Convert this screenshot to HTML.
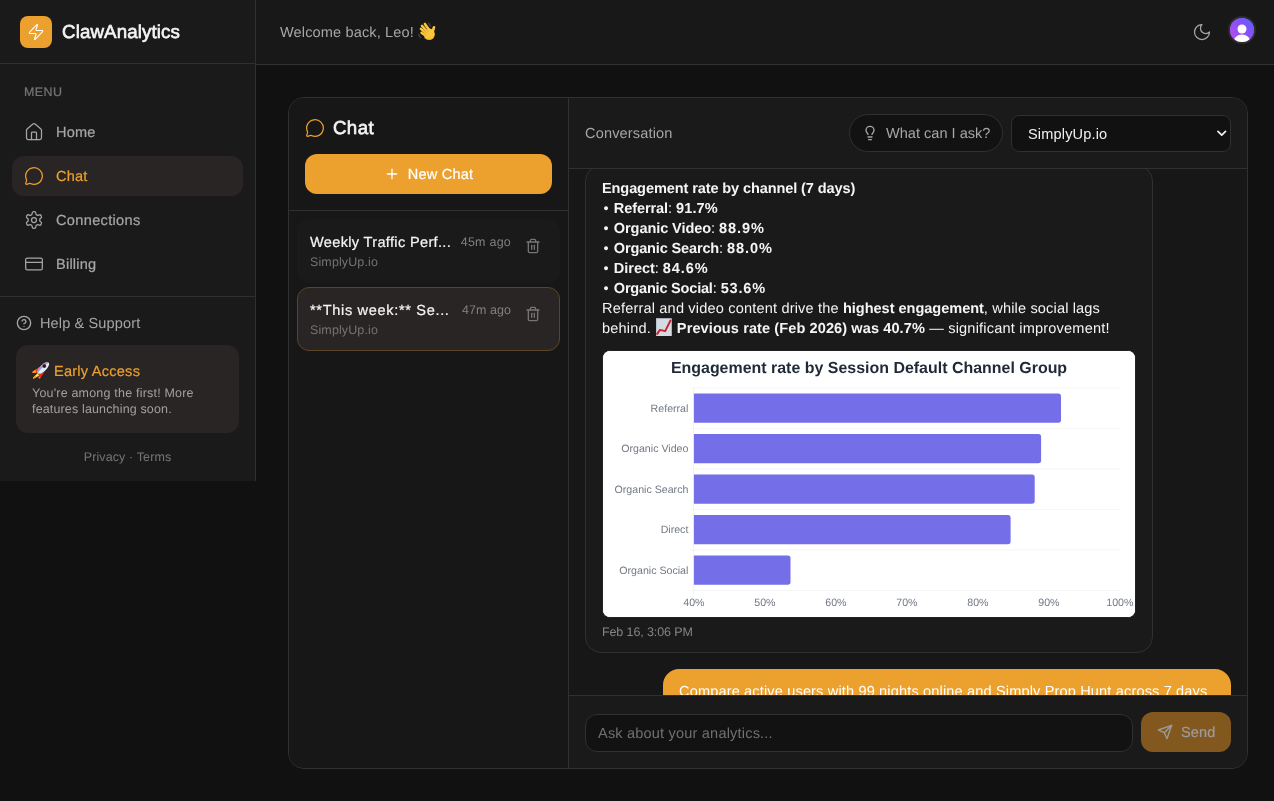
<!DOCTYPE html>
<html lang="en">
<head>
<meta charset="utf-8">
<title>ClawAnalytics – Chat</title>
<style>
*{box-sizing:border-box;margin:0;padding:0}
html,body{width:100%;height:100%;background:#111111;overflow:hidden}
body{text-rendering:geometricPrecision;font-family:"Liberation Sans", Arial, Helvetica, sans-serif;font-size:14.56px;line-height:20px;color:#f5f5f5;-webkit-font-smoothing:antialiased}
svg{display:block;flex:none}
.ic{fill:none;stroke:currentColor;stroke-width:1.5;stroke-linecap:round;stroke-linejoin:round}
#app{position:absolute;left:0;top:0;width:1280px;height:801px;overflow:hidden;will-change:transform}
.nw{white-space:nowrap}
.pre{white-space:pre}
.s2{stroke-width:2}

/* ---------- sidebar ---------- */
.sidebar{position:absolute;left:0;top:0;width:256px;height:481px;background:#1a1a1a;border-right:1px solid #303030}
.brand{height:64px;border-bottom:1px solid #303030;display:flex;align-items:center;padding-left:20px}
.logo{width:32px;height:32px;border-radius:8px;background:#eca02e;color:#fff;display:flex;align-items:center;justify-content:center}
.brand b{margin-left:10px;font-size:18.72px;line-height:28px;font-weight:600;color:#f5f5f5}
.nav{padding:12px 12px 12px 12px;height:233px;border-bottom:1px solid #303030}
.nav .lbl{height:32px;padding:8px 12px;font-size:12.48px;line-height:16px;font-weight:500;color:#757575;text-transform:uppercase}
.nav a{display:flex;align-items:center;height:40px;margin-top:4px;padding:0 12px;border-radius:12px;color:#a6a6a6;font-weight:500;text-decoration:none}
.nav a span{margin-left:12px}
.nav a.on{background:#292524;color:#eca02e}
.foot{padding:16px}
.help{display:flex;align-items:center;height:20px;color:#a6a6a6}
.help span{margin-left:8px}
.early{margin-top:12px;height:88px;border-radius:12px;background:#292524;padding:16px}
.early h4{font-size:14.56px;line-height:20px;height:20px;font-weight:500;color:#eca02e;white-space:pre}
.early p{margin-top:4px;font-size:12.48px;line-height:16px;color:#a0a0a0}
.legal{margin-top:16px;font-size:12.48px;line-height:16px;color:#757575;text-align:center}

/* ---------- top bar ---------- */
.top{position:absolute;left:256px;top:0;width:1024px;height:65px;background:#181818;border-bottom:1px solid #303030}
.top .hello{position:absolute;left:24px;top:22px;height:20px;color:#a6a6a6;white-space:pre}
.top .moon{position:absolute;left:936px;top:22px;color:#a6a6a6}
.top .avatar{position:absolute;left:972px;top:16px;width:28px;height:28px;border-radius:50%;overflow:hidden;border:2px solid #2d2d2d;background:#8b5cf6}

/* ---------- card ---------- */
.card{position:absolute;left:288px;top:97px;width:960px;height:672px;border:1px solid #303030;border-radius:16px;overflow:hidden;background:#1a1a1a}
.list{position:absolute;left:0;top:0;width:280px;height:670px;background:#171717;border-right:1px solid #303030}
.list .hd{height:113px;padding:16px;border-bottom:1px solid #303030}
.list h2{display:flex;align-items:center;height:28px;font-size:18.72px;line-height:28px;font-weight:600;color:#f5f5f5}
.list h2 svg{color:#eca02e;margin-right:8px}
.newchat{margin-top:12px;height:40px;border-radius:12px;background:#eca02e;color:#fff;font-weight:500;display:flex;align-items:center;justify-content:center}
.newchat span{margin-left:8px}
.items{padding:8px}
.item{position:relative;height:64px;border:1px solid transparent;border-radius:12px;background:#1a1a1a;padding:12px;margin-bottom:4px}
.item.on{background:#292524;border-color:#5c4524}
.item .ttl{position:absolute;left:12px;top:12px;font-weight:500;color:#f5f5f5}
.item .sub{position:absolute;left:12px;top:34px;font-size:12.48px;line-height:16px;color:#737373}
.item .ago{position:absolute;right:48px;top:14px;font-size:12.48px;line-height:16px;color:#808080}
.item .del{position:absolute;left:227px;top:18px;color:#757575}

.conv{position:absolute;left:280px;top:0;width:678px;height:670px}
.conv .hd{position:absolute;left:0;top:0;width:678px;height:71px;border-bottom:1px solid #303030;background:#1a1a1a}
.conv .hd .name{position:absolute;left:16px;top:25px;color:#a6a6a6}
.ask{position:absolute;left:280px;top:16px;width:154px;height:38px;border:1px solid #303030;border-radius:19px;background:#121212;color:#a6a6a6;display:flex;align-items:center;padding-left:12px}
.ask span{margin-left:8px}
.sel{position:absolute;left:442px;top:17px;width:220px;height:37px;border:1px solid #303030;border-radius:8px;background:#111;color:#f0f0f0}
.sel select{position:absolute;left:0;top:0;width:100%;height:100%;appearance:none;-webkit-appearance:none;background:transparent;border:0;outline:0;color:inherit;font:inherit;padding:0 16px;line-height:20px}
.sel svg{position:absolute;right:-1px;top:8px;pointer-events:none}

.msgs{position:absolute;left:0;top:71px;width:678px;height:526px;overflow:hidden;background:#171717}
.bot{position:absolute;left:16px;top:-4px;width:568px;height:488px;border:1px solid #303030;border-radius:16px;background:#1a1a1a;padding:12px 16px}
.bot p{height:20px;color:#f5f5f5}
.bot b{font-weight:700}
.chart{margin-top:12px;width:534px;height:268px;border-radius:8px;border:1px solid #222;background:#fff;overflow:hidden}
.stamp{margin-top:6px;font-size:12.48px;line-height:16px;color:#858585}
.user{position:absolute;left:94px;top:500px;width:568px;height:44px;border-radius:16px;background:#eca02e;color:#fff;padding:12px 16px}

.compose{position:absolute;left:0;top:597px;width:678px;height:73px;border-top:1px solid #303030;background:#1a1a1a}
.inp{position:absolute;left:16px;top:18px;width:548px;height:38px;border:1px solid #303030;border-radius:12px;background:#121212;color:#707070;padding:8px 12px}
.send{position:absolute;left:572px;top:16px;width:90px;height:40px;border-radius:12px;background:#83581f;color:#9b9b9b;font-weight:500;display:flex;align-items:center;padding-left:16px}
.send span{margin-left:8px}
.emo{display:inline-block;position:relative;height:0;vertical-align:baseline}
.emo svg{position:absolute}
#t-m2a,#t-m3a,#t-m4a,#t-m5a,#t-m6a{margin-left:1.4px;margin-right:-1.4px}.brand b,.list h2{font-weight:400;-webkit-text-stroke:.65px currentColor}.nav a,.nav .lbl,.early h4,.newchat,.item .ttl,.send{-webkit-text-stroke:.22px currentColor}.nav a span,.help span,.early h4,.newchat span,.name,.ask span,.bot p,.user span,.inp span,.send span{position:relative;top:1px}.top .hello{top:23px}.item .ttl{top:13px}.conv .hd .name{top:26px}
/*LS*/
#t-brand{letter-spacing:0.120px}
#t-menu{letter-spacing:0.457px}
#t-home{letter-spacing:0.184px}
#t-chat{letter-spacing:0.168px}
#t-conn{letter-spacing:0.338px}
#t-bill{letter-spacing:0.228px}
#t-help{letter-spacing:0.117px}
#t-early{letter-spacing:0.242px}
#t-ea1{letter-spacing:0.214px}
#t-ea2{letter-spacing:0.163px}
#t-legal{letter-spacing:0.130px}
#t-hello{letter-spacing:0.131px}
#t-h2{letter-spacing:0.367px}
#t-new{letter-spacing:0.182px}
#t-i1{letter-spacing:0.338px}
#t-i1s{letter-spacing:0.135px}
#t-i1a{letter-spacing:0.243px}
#t-i2{letter-spacing:0.673px}
#t-i2s{letter-spacing:0.135px}
#t-i2a{letter-spacing:0.085px}
#t-m1{letter-spacing:-0.110px}
#t-m2a{letter-spacing:1.336px}
#t-m2b{letter-spacing:-0.096px}
#t-m2c{letter-spacing:-0.055px}
#t-m2d{letter-spacing:0.113px}
#t-m3a{letter-spacing:1.336px}
#t-m3b{letter-spacing:-0.090px}
#t-m3c{letter-spacing:-0.055px}
#t-m3d{letter-spacing:0.900px}
#t-m4a{letter-spacing:1.336px}
#t-m4b{letter-spacing:-0.162px}
#t-m4c{letter-spacing:-0.055px}
#t-m4d{letter-spacing:0.922px}
#t-m5a{letter-spacing:1.336px}
#t-m5b{letter-spacing:-0.044px}
#t-m5c{letter-spacing:-0.055px}
#t-m5d{letter-spacing:0.887px}
#t-m6a{letter-spacing:1.336px}
#t-m6b{letter-spacing:-0.213px}
#t-m6c{letter-spacing:-0.055px}
#t-m6d{letter-spacing:0.806px}
#t-m7a{letter-spacing:0.175px}
#t-m7b{letter-spacing:-0.032px}
#t-m7c{letter-spacing:0.157px}
#t-m8a{letter-spacing:0.180px}
#t-m8b{letter-spacing:-0.109px}
#t-m8c{letter-spacing:0.092px}
#t-m8d{letter-spacing:0.194px}
#t-stamp{letter-spacing:-0.090px}
#t-user{letter-spacing:0.153px}
#t-conv{letter-spacing:0.158px}
#t-ask{letter-spacing:0.009px}
#t-sel{letter-spacing:0.159px}
#t-ph{letter-spacing:0.184px}
#t-send{letter-spacing:0.090px}

/*ENDLS*/
</style>
</head>
<body>
<div id="app">

<aside class="sidebar">
  <div class="brand">
    <div class="logo"><svg class="ic" width="18" height="18" viewBox="0 0 24 24"><path d="M4 14a1 1 0 0 1-.78-1.63l9.900-10.200a.5.5 0 0 1 .86.46l-1.920 6.020A1 1 0 0 0 13 10h7a1 1 0 0 1 .78 1.630l-9.900 10.200a.5.5 0 0 1-.86-.46l1.920-6.020A1 1 0 0 0 11 14z"/></svg></div>
    <b class="nw" id="t-brand">ClawAnalytics</b>
  </div>
  <nav class="nav">
    <div class="lbl"><span class="nw" id="t-menu">MENU</span></div>
    <a><svg class="ic" width="20" height="20" viewBox="0 0 24 24"><path d="M15 21v-8a1 1 0 0 0-1-1h-4a1 1 0 0 0-1 1v8"/><path d="M3 10a2 2 0 0 1 .709-1.528l7-5.999a2 2 0 0 1 2.582 0l7 5.999A2 2 0 0 1 21 10v9a2 2 0 0 1-2 2H5a2 2 0 0 1-2-2z"/></svg><span class="nw" id="t-home">Home</span></a>
    <a class="on"><svg class="ic" width="20" height="20" viewBox="0 0 24 24"><path d="M2.992 16.342a2 2 0 0 1 .094 1.167l-1.065 3.290a1 1 0 0 0 1.236 1.168l3.413-.998a2 2 0 0 1 1.099.092 10 10 0 1 0-4.777-4.719"/></svg><span class="nw" id="t-chat">Chat</span></a>
    <a><svg class="ic" width="20" height="20" viewBox="0 0 24 24"><path d="M12.220 2h-.44a2 2 0 0 0-2 2v.18a2 2 0 0 1-1 1.730l-.43.25a2 2 0 0 1-2 0l-.15-.08a2 2 0 0 0-2.730.73l-.22.38a2 2 0 0 0 .73 2.730l.15.1a2 2 0 0 1 1 1.720v.51a2 2 0 0 1-1 1.740l-.15.09a2 2 0 0 0-.73 2.730l.22.38a2 2 0 0 0 2.730.73l.15-.08a2 2 0 0 1 2 0l.43.25a2 2 0 0 1 1 1.730V20a2 2 0 0 0 2 2h.44a2 2 0 0 0 2-2v-.18a2 2 0 0 1 1-1.730l.43-.25a2 2 0 0 1 2 0l.15.08a2 2 0 0 0 2.730-.73l.22-.39a2 2 0 0 0-.73-2.730l-.15-.08a2 2 0 0 1-1-1.740v-.5a2 2 0 0 1 1-1.740l.15-.09a2 2 0 0 0 .73-2.730l-.22-.38a2 2 0 0 0-2.730-.73l-.15.08a2 2 0 0 1-2 0l-.43-.25a2 2 0 0 1-1-1.730V4a2 2 0 0 0-2-2z"/><circle cx="12" cy="12" r="3"/></svg><span class="nw" id="t-conn">Connections</span></a>
    <a><svg class="ic" width="20" height="20" viewBox="0 0 24 24"><rect width="20" height="14" x="2" y="5" rx="2"/><path d="M2 10h20"/></svg><span class="nw" id="t-bill">Billing</span></a>
  </nav>
  <div class="foot">
    <div class="help"><svg class="ic s2" width="16" height="16" viewBox="0 0 24 24"><circle cx="12" cy="12" r="10"/><path d="M9.090 9a3 3 0 0 1 5.830 1c0 2-3 3-3 3"/><path d="M12 17h.01"/></svg><span class="nw" id="t-help">Help &amp; Support</span></div>
    <div class="early">
      <h4><span class="emo" style="width:17.7px"><svg style="left:0px;bottom:-2.6px" role="img" aria-label="🚀" width="18" height="18" viewBox="0 0 18 18"><path d="M7.400 5.900 0.200 11 0.900 12.100 6.300 11.600z" fill="#f2401c"/><path d="M3.600 8.600 0.200 11 0.900 12.100 4 11.800z" fill="#f9a11b"/><path d="M12.400 11.300 7.900 17.600 6.600 17.300 6.700 12.600z" fill="#f0261b"/><path d="M8.700 16.400 7.900 17.600 6.600 17.300 6.600 15.400z" fill="#f57a1c"/><path d="M6 11.800 1 16.800 1.500 17.800 7 14.800z" fill="#fde03a"/><path d="M3.300 14.500 1 16.800 1.500 17.800 4.400 16.200z" fill="#f59b1c"/><g transform="rotate(-45 11.300 7)"><ellipse cx="11.300" cy="7" rx="7.600" ry="3.200" fill="#e4ebf4"/><path d="M3.700 7a7.600 3.200 0 0 1 15.200 0a9 2 0 0 0-15.200 0z" fill="#7ba7dc"/></g><circle cx="12.300" cy="5.100" r="2" fill="#b3202a"/><circle cx="12.300" cy="5.100" r="1.300" fill="#101820"/></svg></span><span id="t-early"> Early Access</span></h4>
      <p><span class="nw" id="t-ea1">You're among the first! More</span><br><span class="nw" id="t-ea2">features launching soon.</span></p>
    </div>
    <div class="legal"><span class="nw" id="t-legal">Privacy · Terms</span></div>
  </div>
</aside>

<header class="top">
  <div class="hello"><span class="nw" id="t-hello" style="white-space:pre">Welcome back, Leo! </span><span class="emo" style="width:17.7px"><svg style="left:0px;bottom:-3.0px" role="img" aria-label="👋" width="18" height="18.4" viewBox="0 0 18 18.4"><g fill="none" stroke="#3d4043" stroke-width="1.500" stroke-linecap="round"><path d="M10.500 1.200 12.600 4.100"/><path d="M0.400 12.600 2.700 15.600"/></g><g fill="none" stroke="#fcc63a" stroke-linecap="round"><path d="M6.900 1.900 11.800 8.700" stroke-width="2.500"/><path d="M4 3.900 9.800 10.300" stroke-width="2.500"/><path d="M2.900 6.900 8.800 12.200" stroke-width="2.500"/><path d="M3.500 10.700 8.300 14.200" stroke-width="2.400"/><path d="M16 5.300 14.200 10.800" stroke-width="2.700"/></g><ellipse cx="11.300" cy="12.300" rx="5.500" ry="5.700" fill="#fcc63a"/><g fill="none" stroke="#d9941c" stroke-width=".6" stroke-linecap="round"><path d="M6.400 4.600 10 9.100"/><path d="M4.900 7 8.500 10.900"/><path d="M4.600 10 7.600 12.900"/></g><path d="M6.500 15.800Q11 19.600 15.600 15.600" fill="none" stroke="#e6a01e" stroke-width=".9" stroke-linecap="round"/></svg></span></div>
  <svg class="ic moon" width="20" height="20" viewBox="0 0 24 24"><path d="M12 3a6 6 0 0 0 9 9 9 9 0 1 1-9-9Z"/></svg>
  <div class="avatar"><svg width="24" height="24" viewBox="0 0 24 24"><defs><linearGradient id="avg" x1="0" y1="1" x2="1" y2="0"><stop offset="0" stop-color="#c04df2"/><stop offset=".55" stop-color="#8a4ff7"/><stop offset="1" stop-color="#5a63ff"/></linearGradient></defs><rect width="24" height="24" fill="url(#avg)"/><circle cx="12" cy="11" r="4.500" fill="#fff"/><ellipse cx="12" cy="24.200" rx="8.500" ry="7.800" fill="#fff"/></svg></div>
</header>

<main class="card">
  <section class="list">
    <div class="hd">
      <h2><svg class="ic" width="20" height="20" viewBox="0 0 24 24"><path d="M2.992 16.342a2 2 0 0 1 .094 1.167l-1.065 3.290a1 1 0 0 0 1.236 1.168l3.413-.998a2 2 0 0 1 1.099.092 10 10 0 1 0-4.777-4.719"/></svg><span class="nw" id="t-h2">Chat</span></h2>
      <div class="newchat"><svg class="ic s2" width="16" height="16" viewBox="0 0 24 24"><path d="M5 12h14"/><path d="M12 5v14"/></svg><span class="nw" id="t-new">New Chat</span></div>
    </div>
    <div class="items">
      <div class="item">
        <div class="ttl nw" id="t-i1">Weekly Traffic Perf...</div>
        <div class="sub nw" id="t-i1s">SimplyUp.io</div>
        <div class="ago nw" id="t-i1a">45m ago</div>
        <svg class="ic s2 del" width="16" height="16" viewBox="0 0 24 24"><path d="M3 6h18"/><path d="M19 6v14c0 1-1 2-2 2H7c-1 0-2-1-2-2V6"/><path d="M8 6V4c0-1 1-2 2-2h4c1 0 2 1 2 2v2"/><path d="M10 11v6"/><path d="M14 11v6"/></svg>
      </div>
      <div class="item on">
        <div class="ttl nw" id="t-i2">**This week:** Se...</div>
        <div class="sub nw" id="t-i2s">SimplyUp.io</div>
        <div class="ago nw" id="t-i2a">47m ago</div>
        <svg class="ic s2 del" width="16" height="16" viewBox="0 0 24 24"><path d="M3 6h18"/><path d="M19 6v14c0 1-1 2-2 2H7c-1 0-2-1-2-2V6"/><path d="M8 6V4c0-1 1-2 2-2h4c1 0 2 1 2 2v2"/><path d="M10 11v6"/><path d="M14 11v6"/></svg>
      </div>
    </div>
  </section>

  <section class="conv">
    <div class="msgs">
      <div class="bot">
        <p class="nw"><b id="t-m1">Engagement rate by channel (7 days)</b></p>
        <p class="nw pre"><span id="t-m2a">• </span><b id="t-m2b">Referral</b><span id="t-m2c">: </span><b id="t-m2d">91.7%</b></p>
        <p class="nw pre"><span id="t-m3a">• </span><b id="t-m3b">Organic Video</b><span id="t-m3c">: </span><b id="t-m3d">88.9%</b></p>
        <p class="nw pre"><span id="t-m4a">• </span><b id="t-m4b">Organic Search</b><span id="t-m4c">: </span><b id="t-m4d">88.0%</b></p>
        <p class="nw pre"><span id="t-m5a">• </span><b id="t-m5b">Direct</b><span id="t-m5c">: </span><b id="t-m5d">84.6%</b></p>
        <p class="nw pre"><span id="t-m6a">• </span><b id="t-m6b">Organic Social</b><span id="t-m6c">: </span><b id="t-m6d">53.6%</b></p>
        <p class="nw pre"><span id="t-m7a">Referral and video content drive the </span><b id="t-m7b">highest engagement</b><span id="t-m7c">, while social lags</span></p>
        <p class="nw pre e8"><span id="t-m8a">behind. </span><span class="emo" style="width:17.7px"><svg style="left:0.85px;bottom:-3.0px" role="img" aria-label="📈" width="16" height="18.2" viewBox="0 0 16 18.2"><rect x=".2" y=".2" width="15.600" height="17.800" rx=".5" fill="#d5dbe3"/><rect x=".2" y=".2" width="1" height="17.800" fill="#c3cad4"/><path d="M1.200 15.900 4 11.900 9.200 13.100 14.500 2.500" fill="none" stroke="#c8232c" stroke-width="1.900" stroke-linejoin="round" stroke-linecap="round"/></svg></span><span id="t-m8b"> </span><b id="t-m8c">Previous rate (Feb 2026) was 40.7%</b><span id="t-m8d"> — significant improvement!</span></p>
        <div class="chart"><svg width="532" height="266" viewBox="0 0 532 266" font-family="Liberation Sans, Arial, Helvetica, sans-serif">
<rect width="532" height="266" fill="#fff"/>
<path d="M87.4 36.9H517.3 M87.4 77.4H517.3 M87.4 117.9H517.3 M87.4 158.4H517.3 M87.4 198.9H517.3 M87.4 239.4H517.3" stroke="#f0f1f3" stroke-width="0.700" fill="none"/>
<path d="M90.5 36.9V242.9" stroke="#eceef0" stroke-width="0.700" fill="none"/>
<text x="266" y="22.300" text-anchor="middle" font-size="15.960" font-weight="700" fill="#1f2937">Engagement rate by Session Default Channel Group</text>
<path d="M90.9 42.60H455.3a2.7 2.7 0 0 1 2.7 2.7V69.05a2.7 2.7 0 0 1 -2.7 2.7H90.9z" fill="#746ee8"/>
<text x="85.400" y="60.6" text-anchor="end" font-size="10.640" fill="#727986">Referral</text>
<path d="M90.9 83.10H435.4a2.7 2.7 0 0 1 2.7 2.7V109.55a2.7 2.7 0 0 1 -2.7 2.7H90.9z" fill="#746ee8"/>
<text x="85.400" y="101.1" text-anchor="end" font-size="10.640" fill="#727986">Organic Video</text>
<path d="M90.9 123.60H429.0a2.7 2.7 0 0 1 2.7 2.7V150.05a2.7 2.7 0 0 1 -2.7 2.7H90.9z" fill="#746ee8"/>
<text x="85.400" y="141.6" text-anchor="end" font-size="10.640" fill="#727986">Organic Search</text>
<path d="M90.9 164.10H404.9a2.7 2.7 0 0 1 2.7 2.7V190.55a2.7 2.7 0 0 1 -2.7 2.7H90.9z" fill="#746ee8"/>
<text x="85.400" y="182.1" text-anchor="end" font-size="10.640" fill="#727986">Direct</text>
<path d="M90.9 204.60H184.8a2.7 2.7 0 0 1 2.7 2.7V231.05a2.7 2.7 0 0 1 -2.7 2.7H90.9z" fill="#746ee8"/>
<text x="85.400" y="222.6" text-anchor="end" font-size="10.640" fill="#727986">Organic Social</text>
<text x="90.9" y="254.700" text-anchor="middle" font-size="10.640" fill="#727986">40%</text>
<text x="161.9" y="254.700" text-anchor="middle" font-size="10.640" fill="#727986">50%</text>
<text x="232.9" y="254.700" text-anchor="middle" font-size="10.640" fill="#727986">60%</text>
<text x="303.9" y="254.700" text-anchor="middle" font-size="10.640" fill="#727986">70%</text>
<text x="374.9" y="254.700" text-anchor="middle" font-size="10.640" fill="#727986">80%</text>
<text x="445.9" y="254.700" text-anchor="middle" font-size="10.640" fill="#727986">90%</text>
<text x="516.9" y="254.700" text-anchor="middle" font-size="10.640" fill="#727986">100%</text>
</svg></div>
        <div class="stamp"><span class="nw" id="t-stamp">Feb 16, 3:06 PM</span></div>
      </div>
      <div class="user"><span class="nw" id="t-user">Compare active users with 99 nights online and Simply Prop Hunt across 7 days</span></div>
    </div>
    <div class="hd">
      <div class="name nw" id="t-conv">Conversation</div>
      <div class="ask"><svg class="ic s2" width="16" height="16" viewBox="0 0 24 24"><path d="M15 14c.2-1 .7-1.700 1.500-2.500 1-.9 1.500-2.200 1.500-3.500A6 6 0 0 0 6 8c0 1 .2 2.200 1.500 3.500.7.7 1.300 1.500 1.500 2.500"/><path d="M9 18h6"/><path d="M10 22h4"/></svg><span class="nw" id="t-ask">What can I ask?</span></div>
      <div class="sel"><select id="t-sel" aria-label="Property"><option>SimplyUp.io</option></select><svg width="20" height="20" viewBox="0 0 20 20" fill="none" stroke="#f0f0f0" stroke-width="1.700" stroke-linecap="round" stroke-linejoin="round"><path d="M6.950 7.300l3.800 3.800 3.800-3.800"/></svg></div>
    </div>
    <div class="compose">
      <div class="inp"><span class="nw" id="t-ph">Ask about your analytics...</span></div>
      <div class="send"><svg class="ic s2" width="16" height="16" viewBox="0 0 24 24"><path d="m22 2-7 20-4-9-9-4Z"/><path d="M22 2 11 13"/></svg><span class="nw" id="t-send">Send</span></div>
    </div>
  </section>
</main>

</div>
</body>
</html>
